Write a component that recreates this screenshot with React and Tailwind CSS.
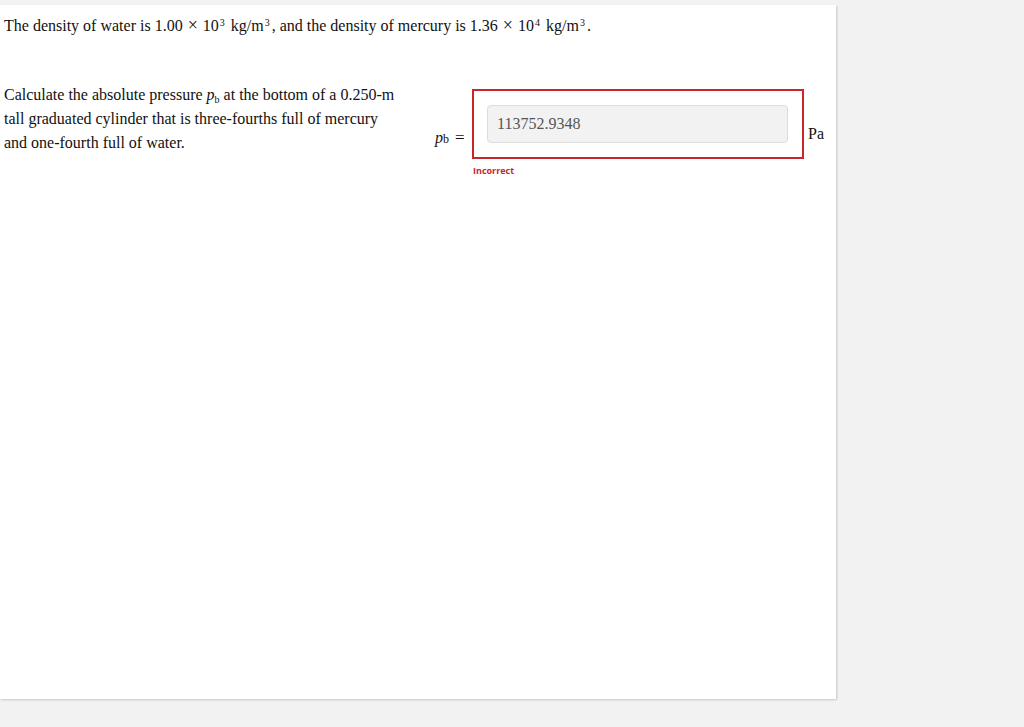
export default function App() {
  return (
    <div className="min-h-[727px] w-[1024px] bg-[#f2f2f2] pt-[5px]">
      <div className="h-[694px] w-[836px] bg-white shadow-[1px_1px_2px_rgba(0,0,0,0.18)] pl-[4px] pt-[9px] text-[16px] leading-[24px] text-[#111] font-['Liberation_Serif',serif]">
        <p>
          The density of water is 1.00 <span className="mx-[1px] text-[18px] leading-none">×</span> 10<sup className="ml-[1px] mr-[2px] text-[10px] leading-none">3</sup> kg/m<sup className="ml-[1px] mr-[2px] text-[10px] leading-none">3</sup>, and the density of mercury is 1.36 <span className="mx-[1px] text-[18px] leading-none">×</span> 10<sup className="ml-[1px] mr-[2px] text-[10px] leading-none">4</sup> kg/m<sup className="ml-[1px] mr-[2px] text-[10px] leading-none">3</sup>.
        </p>

        <div className="mt-[45px] flex">
          <p className="w-[400px]">
            Calculate the absolute pressure <i>p</i><sub className="text-[10px] leading-none">b</sub> at the bottom of a 0.250-m tall graduated cylinder that is three-fourths full of mercury and one-fourth full of water.
          </p>

          <div className="ml-[31px] flex items-start">
            <div className="mt-[43px] w-[37px] whitespace-nowrap">
              <i>p</i><span className="text-[12px]">b</span> <span className="ml-[2px] text-[17px]">=</span>
            </div>
            <div className="mt-[6px]">
              <div className="h-[70px] w-[332px] border-2 border-[#c8262b] pl-[13px] pt-[14px]">
                <div className="flex h-[38px] w-[301px] items-center rounded-[4px] border border-[#dcdcdc] bg-[#f2f2f2] pl-[9px] text-[#555]">
                  113752.9348
                </div>
              </div>
              <div className="mt-[5px] pl-[1px] text-[9px] leading-[14px] font-bold text-[#c8262b] font-['Open_Sans',sans-serif]">
                Incorrect
              </div>
            </div>
            <div className="ml-[4px] mt-[39px]">Pa</div>
          </div>
        </div>
      </div>
    </div>
  );
}
